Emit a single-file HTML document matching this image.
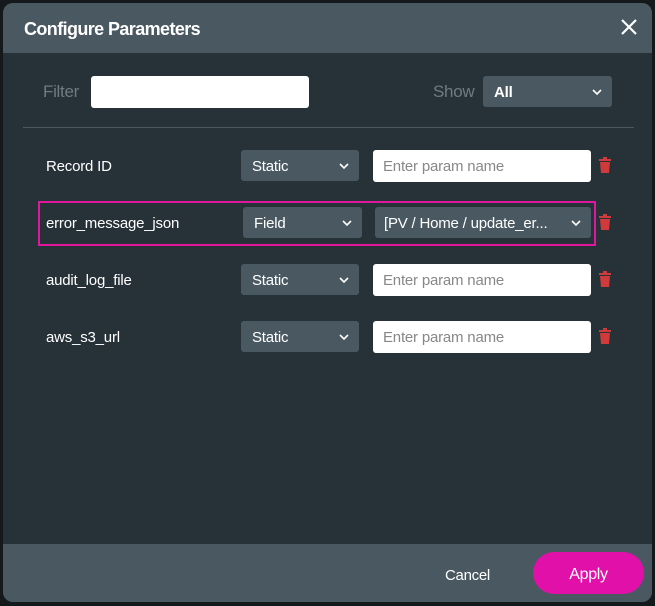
<!DOCTYPE html>
<html><head><style>
*{box-sizing:border-box;margin:0;padding:0}
body{width:655px;height:606px;background:#15191c;font-family:"Liberation Sans",sans-serif;position:relative;overflow:hidden}
.dlg{position:absolute;left:3px;top:3px;width:649px;height:599px;background:#263138;border-radius:10px;overflow:hidden}
.hdr{position:absolute;left:0;top:0;width:100%;height:50px;background:#4a5961}
.hdr h1{position:absolute;left:21px;top:16px;font-size:18px;font-weight:bold;color:#fff;letter-spacing:-0.6px}
.ftr{position:absolute;left:0;top:541px;width:100%;height:58px;background:#4a5961}
.a{position:absolute}
.lbl{color:#fff;font-size:15px;letter-spacing:-0.2px}
.sel{background:#4a5961;border-radius:3px;color:#fff;font-size:15px;padding-left:11px;line-height:33px;letter-spacing:-0.2px}
.inp{background:#fff;border-radius:3px;color:#888;font-size:15px;padding-left:10px;line-height:34px;letter-spacing:-0.2px}
.chev{position:absolute;right:10px;top:11px}
</style></head><body>
<div class="dlg">
<div class="hdr"><h1>Configure Parameters</h1>
<svg class="a" style="left:617px;top:15px" width="18" height="18" viewBox="0 0 18 18"><path d="M2 2L16 16M16 2L2 16" stroke="#fff" stroke-width="2.2"/></svg></div>
<div class="a" style="left:40px;top:79px;color:#6f7b82;font-size:17px;letter-spacing:-0.3px">Filter</div>
<div class="a" style="left:88px;top:73px;width:218px;height:32px;background:#fff;border-radius:3px"></div>
<div class="a" style="left:430px;top:79px;color:#6f7b82;font-size:17px;letter-spacing:-0.3px">Show</div>
<div class="a sel" style="left:480px;top:73px;width:129px;height:31px;font-weight:bold">All<svg class="chev" width="10" height="10" viewBox="0 0 10 10"><path d="M1 3L5 7L9 3" stroke="#fff" stroke-width="1.6" fill="none"/></svg></div>
<div class="a" style="left:20px;top:124px;width:611px;height:1px;background:#4a5961"></div>

<div class="a lbl" style="left:43px;top:155px">Record ID</div>
<div class="a sel" style="left:238px;top:147px;width:118px;height:31px">Static<svg class="chev" width="10" height="10" viewBox="0 0 10 10"><path d="M1 3L5 7L9 3" stroke="#fff" stroke-width="1.6" fill="none"/></svg></div>
<div class="a inp" style="left:370px;top:147px;width:218px;height:32px">Enter param name</div>

<div class="a" style="left:35px;top:198px;width:558px;height:45px;border:2px solid #e0169f"></div>
<div class="a lbl" style="left:43px;top:212px">error_message_json</div>
<div class="a sel" style="left:240px;top:204px;width:119px;height:31px">Field<svg class="chev" width="10" height="10" viewBox="0 0 10 10"><path d="M1 3L5 7L9 3" stroke="#fff" stroke-width="1.6" fill="none"/></svg></div>
<div class="a sel" style="left:372px;top:204px;width:216px;height:31px;padding-left:9px">[PV / Home / update_er...<svg class="chev" width="10" height="10" viewBox="0 0 10 10"><path d="M1 3L5 7L9 3" stroke="#fff" stroke-width="1.6" fill="none"/></svg></div>

<div class="a lbl" style="left:43px;top:269px">audit_log_file</div>
<div class="a sel" style="left:238px;top:261px;width:118px;height:31px">Static<svg class="chev" width="10" height="10" viewBox="0 0 10 10"><path d="M1 3L5 7L9 3" stroke="#fff" stroke-width="1.6" fill="none"/></svg></div>
<div class="a inp" style="left:370px;top:261px;width:218px;height:32px">Enter param name</div>

<div class="a lbl" style="left:43px;top:326px">aws_s3_url</div>
<div class="a sel" style="left:238px;top:318px;width:118px;height:31px">Static<svg class="chev" width="10" height="10" viewBox="0 0 10 10"><path d="M1 3L5 7L9 3" stroke="#fff" stroke-width="1.6" fill="none"/></svg></div>
<div class="a inp" style="left:370px;top:318px;width:218px;height:32px">Enter param name</div>

<svg class="a" style="left:596px;top:154px" width="12" height="16" viewBox="0 0 12 16"><path d="M0 2H12V4H0ZM4 0H8V2H4ZM1 5H11L10 16H2Z" fill="#d03a3a"/></svg>
<svg class="a" style="left:596px;top:211px" width="12" height="16" viewBox="0 0 12 16"><path d="M0 2H12V4H0ZM4 0H8V2H4ZM1 5H11L10 16H2Z" fill="#d03a3a"/></svg>
<svg class="a" style="left:596px;top:268px" width="12" height="16" viewBox="0 0 12 16"><path d="M0 2H12V4H0ZM4 0H8V2H4ZM1 5H11L10 16H2Z" fill="#d03a3a"/></svg>
<svg class="a" style="left:596px;top:325px" width="12" height="16" viewBox="0 0 12 16"><path d="M0 2H12V4H0ZM4 0H8V2H4ZM1 5H11L10 16H2Z" fill="#d03a3a"/></svg>

<div class="ftr">
<div class="a" style="left:442px;top:23px;color:#fff;font-size:15px;letter-spacing:-0.3px">Cancel</div>
<div class="a" style="left:530px;top:8px;width:111px;height:42px;background:#e010a8;border-radius:21px;color:#fff;font-size:16px;text-align:center;line-height:45px;letter-spacing:-0.3px">Apply</div>
</div>
</div>
</body></html>
